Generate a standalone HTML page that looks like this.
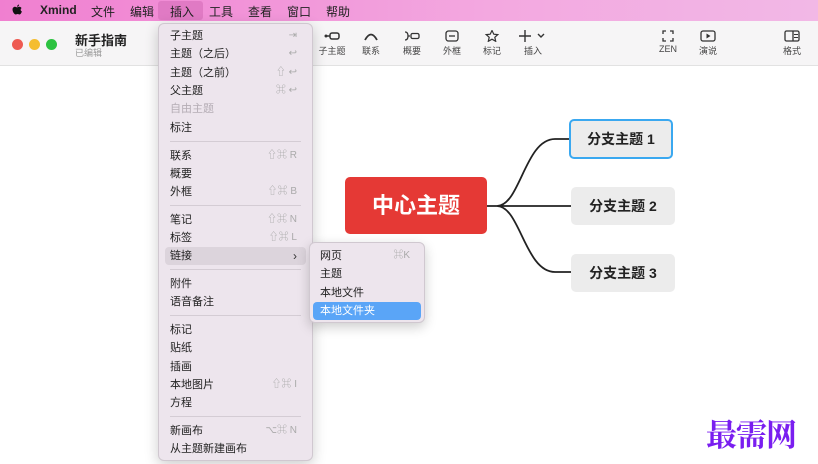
<!DOCTYPE html>
<html><head><meta charset="utf-8"><style>
*{margin:0;padding:0;box-sizing:border-box}
body{width:818px;height:464px;overflow:hidden;background:#fff;font-family:"Liberation Sans","Noto Sans CJK SC",sans-serif;position:relative;color:#222}
.mb{position:absolute;left:0;top:0;width:818px;height:21px;background:linear-gradient(90deg,#f07fd0,#f3a8e0 60%,#f2b8e6);font-size:12px}
.mb span{position:absolute;top:3px}
.tb{position:absolute;left:0;top:21px;width:818px;height:45px;background:#f6f5f6;border-bottom:1px solid #e2e2e2}
.dot{position:absolute;top:39px;width:11px;height:11px;border-radius:50%}
.ti{position:absolute;text-align:center;width:40px;font-size:9px;color:#444}
.ti svg{display:block;margin:0 auto 2px}
.menu{position:absolute;left:158px;top:23px;width:155px;height:438px;background:#ede5ed;border:1px solid #d0c8d0;border-radius:6px;box-shadow:0 4px 14px rgba(0,0,0,.2);font-size:11px}
.it{position:absolute;left:11px;right:11px;height:18px;line-height:18px}
.it b{font-weight:normal;position:absolute;right:4px;color:#aaa;font-size:10px}
.sep{position:absolute;left:11px;right:11px;height:1px;background:#d4ccd4}
.sub{position:absolute;left:309px;top:242px;width:116px;height:81px;background:#ede5ed;border:1px solid #d0c8d0;border-radius:6px;box-shadow:0 4px 12px rgba(0,0,0,.2);font-size:11px}
.br{position:absolute;width:104px;height:38px;background:#ececec;border-radius:5px;font-size:14px;font-weight:bold;text-align:center;line-height:38px;color:#222}
</style></head><body>
<div class="mb">
<svg style="position:absolute;left:11px;top:4px" width="12" height="13" viewBox="0 0 12 14"><path d="M8.2 0.5 C8.3 1.7 7.4 3 6.1 3 C6 1.8 7 0.6 8.2 0.5Z M6 3.6 C6.8 3.6 7.6 3 8.5 3 C9.6 3 10.4 3.6 10.9 4.4 C9.5 5.2 9.7 7.4 11.3 8 C10.9 9.4 9.9 11.3 8.8 11.3 C8 11.3 7.6 10.8 6.7 10.8 C5.8 10.8 5.4 11.3 4.6 11.3 C3.4 11.3 1.2 8.5 1.2 6 C1.2 4.2 2.4 3 3.8 3 C4.7 3 5.3 3.6 6 3.6Z" fill="#111"/></svg>
<span style="left:40px;font-weight:bold">Xmind</span>
<span style="left:91px">文件</span><span style="left:130px">编辑</span>
<div style="position:absolute;left:158px;top:1px;width:45px;height:19px;background:#e07ac4;border-radius:3px"></div>
<span style="left:170px">插入</span><span style="left:209px">工具</span><span style="left:248px">查看</span><span style="left:287px">窗口</span><span style="left:326px">帮助</span>
</div>
<div class="tb"></div>
<div class="dot" style="left:12px;background:#ee5a52"></div>
<div class="dot" style="left:29px;background:#f5bd2f"></div>
<div class="dot" style="left:46px;background:#2cc240"></div>
<div style="position:absolute;left:75px;top:30px;font-size:13px;font-weight:bold">新手指南</div>
<div style="position:absolute;left:75px;top:46px;font-size:9px;color:#999">已编辑</div>

<div class="ti" style="left:312px;top:30px"><svg width="18" height="12"><circle cx="3" cy="6" r="1.5" fill="#333"/><line x1="3" y1="6" x2="7" y2="6" stroke="#333" stroke-width="1.5"/><rect x="7" y="3" width="9" height="6" rx="2" fill="none" stroke="#333" stroke-width="1.5"/></svg>子主题</div>
<div class="ti" style="left:351px;top:30px"><svg width="18" height="12"><path d="M3 10 Q9 -1 15 10" fill="none" stroke="#333" stroke-width="1.8"/></svg>联系</div>
<div class="ti" style="left:392px;top:30px"><svg width="18" height="12"><path d="M2 2 Q5 2 5 6 Q5 10 2 10 M5 6 H7" fill="none" stroke="#333" stroke-width="1.3"/><rect x="8" y="3.5" width="8" height="5" rx="1.5" fill="none" stroke="#333" stroke-width="1.3"/></svg>概要</div>
<div class="ti" style="left:432px;top:30px"><svg width="18" height="12"><rect x="3" y="1" width="12" height="10" rx="2.5" fill="none" stroke="#333" stroke-width="1.3"/><line x1="6" y1="6" x2="12" y2="6" stroke="#333" stroke-width="1.3"/></svg>外框</div>
<div class="ti" style="left:472px;top:30px"><svg width="18" height="12"><path d="M9 0.5 L10.8 4.2 L14.8 4.6 L11.8 7.3 L12.7 11.3 L9 9.2 L5.3 11.3 L6.2 7.3 L3.2 4.6 L7.2 4.2Z" fill="none" stroke="#333" stroke-width="1.2"/></svg>标记</div>
<div class="ti" style="left:513px;top:30px"><svg width="30" height="12"><path d="M7 0 V12 M1 6 H13 M20 4 L23 7 L26 4" fill="none" stroke="#333" stroke-width="1.4"/></svg>插入</div>
<div class="ti" style="left:648px;top:30px"><svg width="18" height="12"><path d="M4 4 V1 H7 M11 1 H14 V4 M14 8 V11 H11 M7 11 H4 V8" fill="none" stroke="#333" stroke-width="1.3"/></svg>ZEN</div>
<div class="ti" style="left:688px;top:30px"><svg width="18" height="12"><rect x="2" y="1" width="14" height="10" rx="2" fill="none" stroke="#333" stroke-width="1.3"/><path d="M7.5 3.5 L11.5 6 L7.5 8.5Z" fill="#333"/></svg>演说</div>
<div class="ti" style="left:772px;top:30px"><svg width="18" height="12"><rect x="2" y="1" width="14" height="10" rx="1.5" fill="none" stroke="#333" stroke-width="1.3"/><line x1="10" y1="1" x2="10" y2="11" stroke="#333" stroke-width="1.3"/><line x1="11" y1="4.5" x2="15" y2="4.5" stroke="#333"/><line x1="11" y1="7.5" x2="15" y2="7.5" stroke="#333"/></svg>格式</div>

<svg style="position:absolute;left:0;top:0" width="818" height="464"><path d="M487 206 H497 C520 206 525 139 555 139 H569 M497 206 H571 M497 206 C520 206 525 272 555 272 H571" fill="none" stroke="#222" stroke-width="1.8"/></svg>
<div style="position:absolute;left:345px;top:177px;width:142px;height:57px;background:#e53935;border-radius:5px;color:#fff;font-size:22px;font-weight:bold;text-align:center;line-height:57px">中心主题</div>
<div class="br" style="left:569px;top:119px;height:40px;border:2px solid #3aa8f0;line-height:36px">分支主题 1</div>
<div class="br" style="left:571px;top:187px">分支主题 2</div>
<div class="br" style="left:571px;top:254px">分支主题 3</div>

<div class="menu">
<div class="it" style="top:3px">子主题<b>⇥</b></div>
<div class="it" style="top:21px">主题（之后）<b>↩</b></div>
<div class="it" style="top:40px">主题（之前）<b>⇧ ↩</b></div>
<div class="it" style="top:58px">父主题<b>⌘ ↩</b></div>
<div class="it" style="top:76px;color:#b5adb5">自由主题</div>
<div class="it" style="top:95px">标注</div>
<div class="sep" style="top:117px"></div>
<div class="it" style="top:123px">联系<b>⇧⌘ R</b></div>
<div class="it" style="top:141px">概要</div>
<div class="it" style="top:159px">外框<b>⇧⌘ B</b></div>
<div class="sep" style="top:181px"></div>
<div class="it" style="top:187px">笔记<b>⇧⌘ N</b></div>
<div class="it" style="top:205px">标签<b>⇧⌘ L</b></div>
<div style="position:absolute;left:6px;right:6px;top:223px;height:18px;background:#dcd4dc;border-radius:4px"></div>
<div class="it" style="top:223px">链接<b style="color:#333;font-size:12px">›</b></div>
<div class="sep" style="top:245px"></div>
<div class="it" style="top:251px">附件</div>
<div class="it" style="top:269px">语音备注</div>
<div class="sep" style="top:291px"></div>
<div class="it" style="top:297px">标记</div>
<div class="it" style="top:315px">贴纸</div>
<div class="it" style="top:334px">插画</div>
<div class="it" style="top:352px">本地图片<b>⇧⌘ I</b></div>
<div class="it" style="top:370px">方程</div>
<div class="sep" style="top:392px"></div>
<div class="it" style="top:398px">新画布<b>⌥⌘ N</b></div>
<div class="it" style="top:416px">从主题新建画布</div>
</div>
<div class="sub">
<div class="it" style="left:10px;right:10px;top:4px">网页<b>⌘K</b></div>
<div class="it" style="left:10px;right:10px;top:22px">主题</div>
<div class="it" style="left:10px;right:10px;top:41px">本地文件</div>
<div style="position:absolute;left:3px;right:3px;top:59px;height:18px;background:#5aa5f7;border-radius:4px"></div>
<div class="it" style="left:10px;right:10px;top:59px;color:#fff">本地文件夹</div>
</div>
<div style="position:absolute;left:706px;top:410px;font-size:31px;color:#7a1ef0;font-family:'Noto Serif CJK SC',serif;font-weight:bold;letter-spacing:-1px">最需网</div>
</body></html>
